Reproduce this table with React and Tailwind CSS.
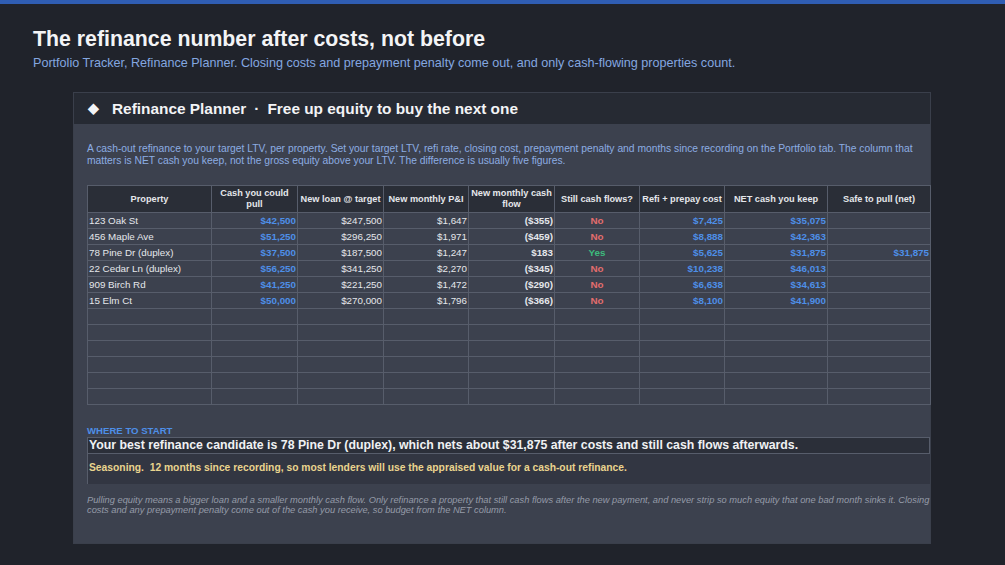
const rows = [
  { name: '123 Oak St', pull: '$42,500', loan: '$247,500', pi: '$1,647', cf: '($355)', ok: false, cost: '$7,425', net: '$35,075', safe: '' },
  { name: '456 Maple Ave', pull: '$51,250', loan: '$296,250', pi: '$1,971', cf: '($459)', ok: false, cost: '$8,888', net: '$42,363', safe: '' },
  { name: '78 Pine Dr (duplex)', pull: '$37,500', loan: '$187,500', pi: '$1,247', cf: '$183', ok: true, cost: '$5,625', net: '$31,875', safe: '$31,875' },
  { name: '22 Cedar Ln (duplex)', pull: '$56,250', loan: '$341,250', pi: '$2,270', cf: '($345)', ok: false, cost: '$10,238', net: '$46,013', safe: '' },
  { name: '909 Birch Rd', pull: '$41,250', loan: '$221,250', pi: '$1,472', cf: '($290)', ok: false, cost: '$6,638', net: '$34,613', safe: '' },
  { name: '15 Elm Ct', pull: '$50,000', loan: '$270,000', pi: '$1,796', cf: '($366)', ok: false, cost: '$8,100', net: '$41,900', safe: '' },
];

const headers = [
  { label: 'Property', w: 'w-[124px]' },
  { label: 'Cash you could pull', w: 'w-[86px]' },
  { label: 'New loan @ target', w: 'w-[86px]' },
  { label: 'New monthly P&I', w: 'w-[85px]' },
  { label: 'New monthly cash flow', w: 'w-[86px]' },
  { label: 'Still cash flows?', w: 'w-[85px]' },
  { label: 'Refi + prepay cost', w: 'w-[85px]' },
  { label: 'NET cash you keep', w: 'w-[103px]' },
  { label: 'Safe to pull (net)', w: 'w-[103px]' },
];

const cell = 'border border-[#575d6b] px-[1px] h-[16px] leading-[14px]';

export default function App() {
  return (
    <div className="w-[1005px] h-[565px] overflow-hidden bg-[#20232b] font-['Liberation_Sans',Arial,sans-serif]">
      <div className="h-[4px] bg-[#2f5db3]" />
      <div className="pl-[33px] pt-[22px]">
        <h1 className="text-[21.3px] leading-[26px] font-bold text-[#f3f4f6]">The refinance number after costs, not before</h1>
        <p className="mt-[3px] text-[12.6px] leading-[16px] text-[#84a7e0]">
          Portfolio Tracker, Refinance Planner. Closing costs and prepayment penalty come out, and only cash-flowing properties count.
        </p>
      </div>

      <section className="ml-[73px] mt-[21px] w-[858px] h-[452px] border border-[#3a3f4b] bg-[#3c414e]">
        <div className="flex items-center h-[31px] bg-[#262a33] pl-[14px] text-[15.4px] font-bold text-[#f3f4f6]">
          <span className="text-[14px] mr-[13px]">◆</span>
          <span>Refinance Planner</span>
          <span className="mx-[8px]">·</span>
          <span>Free up equity to buy the next one</span>
        </div>

        <div className="pl-[13px] pt-[19px]">
          <p className="w-[835px] text-[10.3px] leading-[12px] text-[#8cade3]">
            A cash-out refinance to your target LTV, per property. Set your target LTV, refi rate, closing cost, prepayment penalty and months since recording on the Portfolio tab. The column that matters is NET cash you keep, not the gross equity above your LTV. The difference is usually five figures.
          </p>

          <table className="mt-[18px] w-[843px] table-fixed border-collapse text-[9.8px] text-[#e5e7eb]">
            <thead>
              <tr className="bg-[#2a2e37] h-[27px]">
                {headers.map((h) => (
                  <th key={h.label} className={`${h.w} border border-[#575d6b] px-0 leading-[11px] font-bold text-[9.2px] text-center`}>{h.label}</th>
                ))}
              </tr>
            </thead>
            <tbody>
              {rows.map((r) => (
                <tr key={r.name}>
                  <td className={`${cell} text-left`}>{r.name}</td>
                  <td className={`${cell} text-right font-bold text-[#4e8fe8]`}>{r.pull}</td>
                  <td className={`${cell} text-right`}>{r.loan}</td>
                  <td className={`${cell} text-right`}>{r.pi}</td>
                  <td className={`${cell} text-right font-bold`}>{r.cf}</td>
                  <td className={`${cell} text-center font-bold ${r.ok ? 'text-[#3dbb7d]' : 'text-[#e26d6d]'}`}>{r.ok ? 'Yes' : 'No'}</td>
                  <td className={`${cell} text-right font-bold text-[#4e8fe8]`}>{r.cost}</td>
                  <td className={`${cell} text-right font-bold text-[#4e8fe8]`}>{r.net}</td>
                  <td className={`${cell} text-right font-bold text-[#4e8fe8]`}>{r.safe}</td>
                </tr>
              ))}
              {[0, 1, 2, 3, 4, 5].map((i) => (
                <tr key={i}>
                  {headers.map((h) => (
                    <td key={h.label} className={cell}></td>
                  ))}
                </tr>
              ))}
            </tbody>
          </table>

          <div className="mt-[20px] w-[843px]">
            <p className="text-[9.6px] leading-[12px] font-bold uppercase text-[#4e8fe8]">Where to start</p>
            <div className="h-[17px] border border-[#575d6b] bg-[#2b2f39] pl-[1px] text-[12.3px] leading-[15px] font-bold text-[#f0f1f3]">
              Your best refinance candidate is 78 Pine Dr (duplex), which nets about $31,875 after costs and still cash flows afterwards.
            </div>
            <div className="h-[30px] border-l border-[#575d6b] bg-[#323642] pt-[7px] pl-[1px] text-[10.3px] leading-[14px] font-bold text-[#e9d48e]">
              Seasoning.&nbsp; 12 months since recording, so most lenders will use the appraised value for a cash-out refinance.
            </div>
            <p className="mt-[11px] text-[9.3px] leading-[10px] italic text-[#959ba8]">
              Pulling equity means a bigger loan and a smaller monthly cash flow. Only refinance a property that still cash flows after the new payment, and never strip so much equity that one bad month sinks it. Closing costs and any prepayment penalty come out of the cash you receive, so budget from the NET column.
            </p>
          </div>
        </div>
      </section>
    </div>
  );
}
